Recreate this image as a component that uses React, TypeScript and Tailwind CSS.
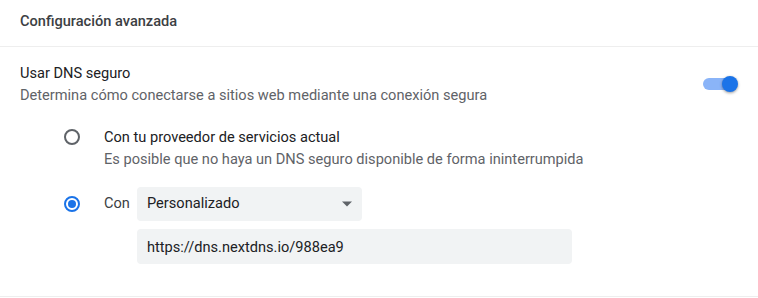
import React, { useState } from "react";

type DnsMode = "automatic" | "custom";

function Radio({ checked, onClick }: { checked: boolean; onClick: () => void }) {
  return (
    <button
      type="button"
      onClick={onClick}
      className={`flex h-4 w-4 shrink-0 items-center justify-center rounded-full border-2 ${
        checked ? "border-[#1a73e8]" : "border-[#5f6368]"
      }`}
    >
      {checked && <span className="h-2 w-2 rounded-full bg-[#1a73e8]" />}
    </button>
  );
}

function Toggle({ on, onChange }: { on: boolean; onChange: (v: boolean) => void }) {
  return (
    <button
      type="button"
      onClick={() => onChange(!on)}
      className="relative flex h-4 w-[36px] shrink-0 items-center"
    >
      <span className={`h-3 w-[28px] rounded-full ${on ? "bg-[#8ab4f8]" : "bg-[#bdc1c6]"}`} />
      <span
        className={`absolute top-0 h-4 w-4 rounded-full shadow-[0_1px_3px_rgba(0,0,0,0.4)] ${
          on ? "left-[19px] bg-[#1a73e8]" : "left-0 bg-white"
        }`}
      />
    </button>
  );
}

export default function App() {
  const [secureDns, setSecureDns] = useState(true);
  const [mode, setMode] = useState<DnsMode>("custom");
  const [url, setUrl] = useState("https://dns.nextdns.io/988ea9");

  return (
    <div className="h-[298px] w-[758px] bg-white font-['Roboto',sans-serif] text-[14.6px] text-[#202124]">
      <div className="flex h-[47px] items-center border-b border-[#eeeeee] px-5 pb-[2px] font-medium text-[#3c4043]">
        Configuración avanzada
      </div>

      <div className="border-b border-[#eeeeee] pb-[32px]">
        {/* Usar DNS seguro */}
        <div className="flex items-center pl-5 pr-[19px] pt-[15px] leading-[22px]">
          <div className="flex-1">
            <div>Usar DNS seguro</div>
            <div className="text-[#5f6368]">Determina cómo conectarse a sitios web mediante una conexión segura</div>
          </div>
          <Toggle on={secureDns} onChange={setSecureDns} />
        </div>

        {/* Current provider */}
        <div className="mt-5 flex items-start pl-16 leading-[22px]">
          <div className="flex h-[22px] items-center">
            <Radio checked={mode === "automatic"} onClick={() => setMode("automatic")} />
          </div>
          <div className="ml-6">
            <div>Con tu proveedor de servicios actual</div>
            <div className="text-[#5f6368]">Es posible que no haya un DNS seguro disponible de forma ininterrumpida</div>
          </div>
        </div>

        {/* Custom provider */}
        <div className="mt-[17px] flex items-center pl-16">
          <Radio checked={mode === "custom"} onClick={() => setMode("custom")} />
          <span className="ml-6 w-[33px] text-[#3c4043]">Con</span>
          <div className="flex h-[34px] w-[225px] items-center justify-between rounded bg-[#f1f3f4] pl-[10px] pr-[8px]">
            <span>Personalizado</span>
            <svg width="12" height="6" viewBox="0 0 12 6" className="mr-[1px]">
              <path d="M1 0.5 L11 0.5 L6 5.5 Z" fill="#5f6368" />
            </svg>
          </div>
        </div>
        <div className="mt-2 pl-[137px]">
          <input
            value={url}
            onChange={(e) => setUrl(e.target.value)}
            className="h-[35px] w-[435px] rounded bg-[#f1f3f4] px-[10px] text-[14.6px] text-[#202124] outline-none"
          />
        </div>
      </div>
    </div>
  );
}
